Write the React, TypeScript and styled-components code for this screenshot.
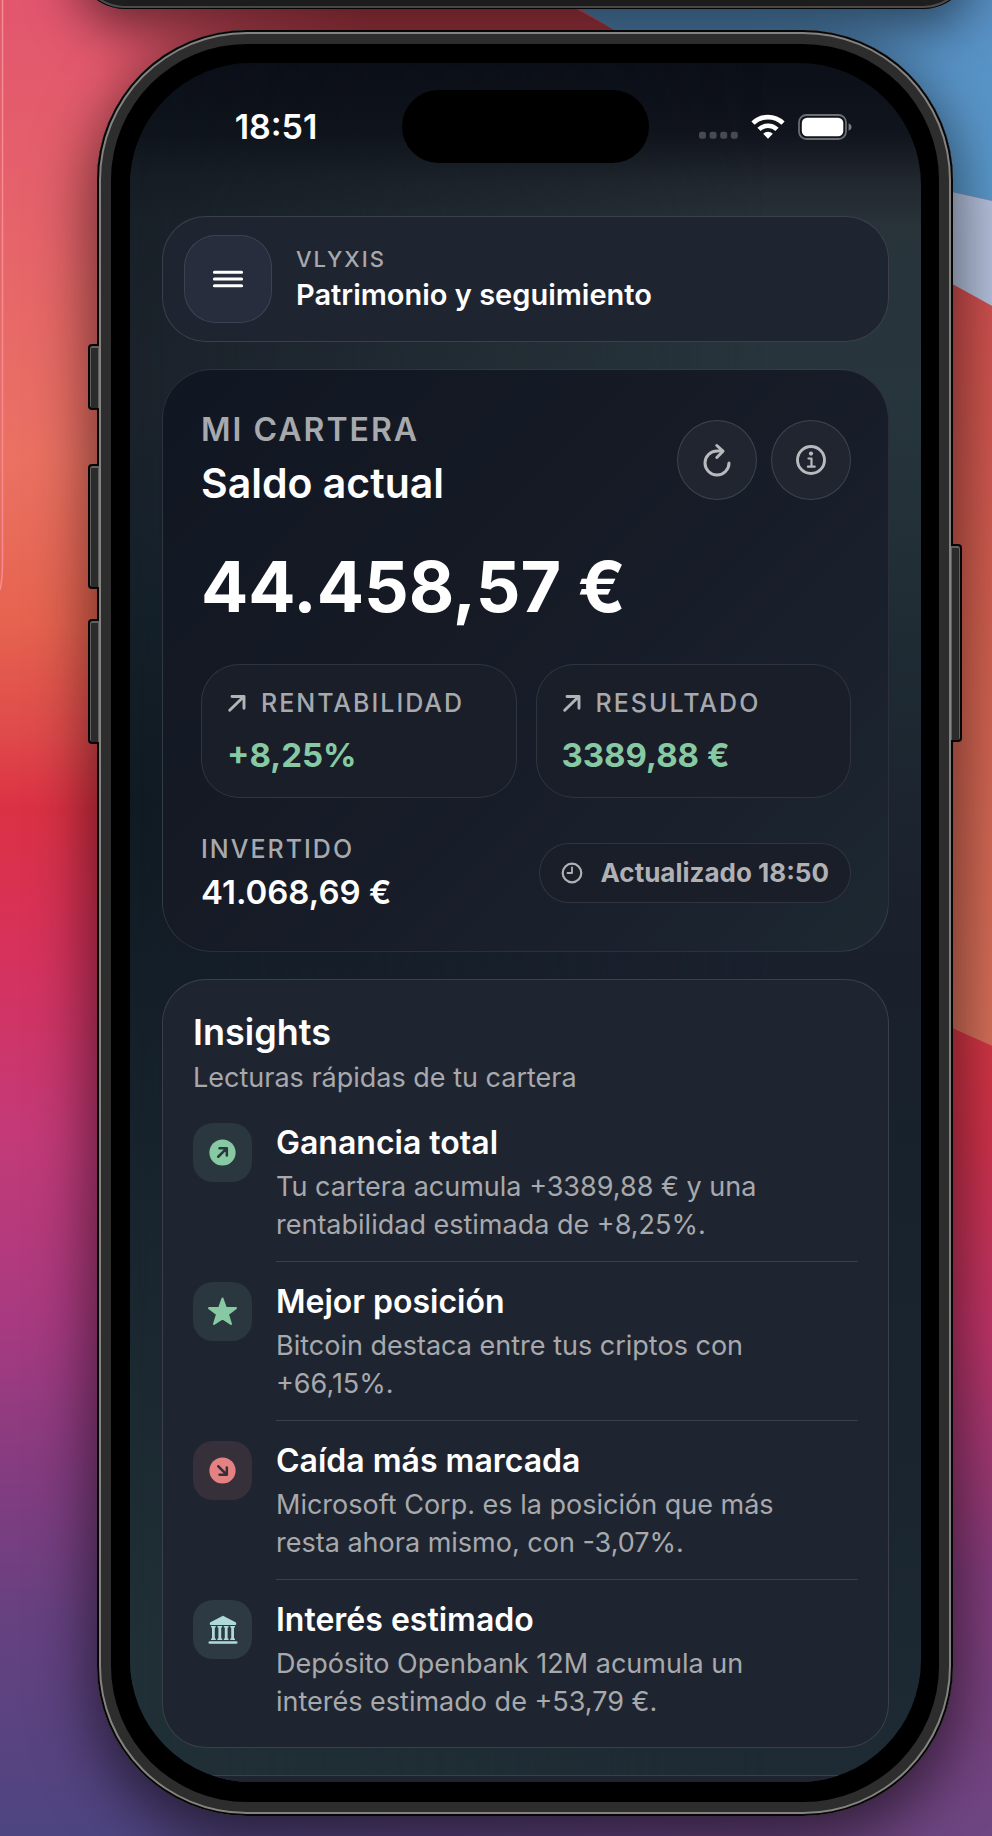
import React from "react";
import styled, { createGlobalStyle, css } from "styled-components";

const GlobalStyle = createGlobalStyle`
  *, *::before, *::after { box-sizing: border-box; }
  body {
    margin: 0;
    font-family: Inter, "Liberation Sans", sans-serif;
    background: #6f3f7c;
  }
  h1, h2, h3, p, ul, dl, dt, dd { margin: 0; padding: 0; font-weight: inherit; }
  button { font: inherit; color: inherit; padding: 0; cursor: pointer; }
`;

const colors = {
  card: "#1f2530",
  line: "rgba(255, 255, 255, 0.12)",
  text: "#ffffff",
  muted: "#a7a9ad",
  gain: "#87c9a3",
  loss: "#e48183",
  mint: "#aedbd8",
};

const Desktop = styled.div`
  position: relative;
  overflow: hidden;
  min-height: 100vh;
`;

const WallpaperSvg = styled.svg`
  position: absolute;
  inset: 0;
  width: 100%;
  height: 100%;
`;

const UpperPhone = styled.div`
  position: relative;
  height: 110px;
  margin: -101px 21px 21px 77px;
  border-radius: 48px;
  background: #1e1e1e;
  box-shadow:
    inset 0 0 0 1px #060606,
    inset 0 0 0 3px #4c4c4c,
    0 20px 50px rgba(0, 0, 0, 0.5);
`;

const Phone = styled.div`
  position: relative;
  margin: 0 39px 20px 97px;
  padding: 33px 32px 34px 33px;
  border-radius: 150px;
  background: #000;
  box-shadow:
    inset 0 0 0 2px #060606,
    inset 0 0 0 4px #858381,
    inset 0 0 0 14px #2d2d2d,
    0 20px 60px 6px rgba(0, 0, 0, 0.55);
`;

const SideKey = styled.span<{ $side: "left" | "right"; $top: number; $height: number }>`
  position: absolute;
  ${(p) => p.$side}: -9px;
  top: ${(p) => p.$top}px;
  width: 11px;
  height: ${(p) => p.$height}px;
  border: 2px solid #060606;
  border-${(p) => (p.$side === "left" ? "right" : "left")}: 0;
  border-radius: ${(p) => (p.$side === "left" ? "4px 0 0 4px" : "0 4px 4px 0")};
  background: #2b2b2b;
  box-shadow: inset 0 1px 0 1px #62605e;
`;

const Screen = styled.div`
  position: relative;
  isolation: isolate;
  overflow: hidden;
  padding: 27px 32px 0;
  border-radius: 122px;
  background: linear-gradient(
    #0b0f18 0,
    #10141c 70px,
    #22282f 120px,
    #28333a 165px,
    #27353c 330px,
    #1f2c34 560px,
    #1a202c 860px,
    #17222c 1120px,
    #1a252f 1440px,
    #1e2b34 1720px
  );

  &::before {
    content: "";
    position: absolute;
    inset: 0;
    z-index: -1;
    background: linear-gradient(
      #0b0f18 0,
      #0f141c 70px,
      #151c23 110px,
      #182028 160px,
      #1b222b 330px,
      #15202a 500px,
      #0f1a22 740px,
      #141e28 920px,
      #19262f 1200px,
      #203036 1600px
    );
    mask-image: linear-gradient(90deg, #000, transparent 80%);
  }
`;

const StatusBar = styled.header`
  display: grid;
  grid-template-columns: 1fr auto 1fr;
  align-items: center;
  margin: 0 -12px 53px;
`;

const Clock = styled.time`
  text-align: center;
  font-size: 34px;
  line-height: 40px;
  font-weight: 600;
  color: ${colors.text};
`;

const Island = styled.div`
  width: 247px;
  height: 73px;
  border-radius: 37px;
  background: #000;
`;

const StatusIcons = styled.div`
  display: flex;
  align-items: center;
  justify-content: center;
  gap: 13px;
`;

const Stack = styled.main`
  display: flex;
  flex-direction: column;
  gap: 27px;
`;

const Card = styled.section`
  border: 1px solid ${colors.line};
  border-radius: 44px;
  background: ${colors.card};
`;

const NavCard = styled(Card)`
  display: flex;
  align-items: center;
  gap: 24px;
  padding: 18px 21px;
`;

const MenuButton = styled.button`
  display: grid;
  place-items: center;
  width: 88px;
  height: 88px;
  border: 1px solid rgba(255, 255, 255, 0.1);
  border-radius: 32px;
  background: #282d3d;
`;

const NavText = styled.div`
  display: grid;
  gap: 4px;
`;

const Overline = styled.p<{ $size?: "small" | "medium" | "large" }>`
  color: ${colors.muted};
  text-transform: uppercase;
  letter-spacing: 2px;
  ${(p) =>
    p.$size === "large"
      ? css`
          font-size: 32px;
          line-height: 38px;
          font-weight: 600;
        `
      : p.$size === "small"
        ? css`
            font-size: 22px;
            line-height: 28px;
            font-weight: 500;
          `
        : css`
            font-size: 25px;
            line-height: 30px;
            font-weight: 500;
          `}
`;

const NavTitle = styled.h1`
  font-size: 29px;
  line-height: 36px;
  font-weight: 600;
  color: ${colors.text};
`;

const BalanceCard = styled(Card)`
  padding: 41px 37px 39px 38px;
  border-radius: 50px;
  border-color: rgba(255, 255, 255, 0.1);
  background: linear-gradient(135deg, #111722 0%, #151a25 40%, #1a202c 75%, #1d2932 100%);
`;

const BalanceHead = styled.div`
  display: flex;
  align-items: center;
  justify-content: space-between;
`;

const HeadText = styled.div`
  display: grid;
  gap: 9px;
`;

const BalanceTitle = styled.h2`
  font-size: 41px;
  line-height: 50px;
  font-weight: 600;
  color: ${colors.text};
`;

const HeadActions = styled.div`
  display: flex;
  gap: 14px;
`;

const RoundButton = styled.button`
  display: grid;
  place-items: center;
  width: 80px;
  height: 80px;
  border: 1px solid rgba(255, 255, 255, 0.14);
  border-radius: 50%;
  background: #20252f;
  color: #b9babd;
`;

const Amount = styled.p`
  margin-top: 37px;
  font-size: 70px;
  line-height: 84px;
  font-weight: 700;
  color: ${colors.text};
`;

const Stats = styled.dl`
  display: grid;
  grid-template-columns: 1fr 1fr;
  gap: 19px;
  margin-top: 35px;
`;

const Stat = styled.div`
  display: grid;
  gap: 17px;
  padding: 23px 25px 22px;
  border: 1px solid rgba(255, 255, 255, 0.1);
  border-radius: 38px;
  background: #191e29;
`;

const StatLabel = styled.dt`
  display: flex;
  align-items: center;
  gap: 14px;
  color: #b3b4b8;
`;

const Figure = styled.dd<{ $tone?: "gain" }>`
  font-size: 33px;
  line-height: 40px;
  font-weight: ${(p) => (p.$tone ? 700 : 600)};
  color: ${(p) => (p.$tone ? colors.gain : colors.text)};
`;

const BalanceFoot = styled.div`
  display: flex;
  align-items: center;
  justify-content: space-between;
  margin-top: 36px;
`;

const Invested = styled.dl`
  display: grid;
  gap: 8px;
`;

const UpdatedPill = styled.p`
  display: flex;
  align-items: center;
  gap: 18px;
  height: 60px;
  padding: 0 21px;
  border: 1px solid rgba(255, 255, 255, 0.1);
  border-radius: 30px;
  background: #191e29;
  color: #b0b1b4;
  font-size: 26px;
  line-height: 30px;
  font-weight: 700;
`;

const InsightsCard = styled(Card)`
  padding: 30px 30px 26px;
`;

const InsightsHead = styled.header`
  display: grid;
  gap: 5px;
`;

const InsightsTitle = styled.h2`
  font-size: 36px;
  line-height: 44px;
  font-weight: 600;
  color: ${colors.text};
`;

const BodyText = styled.p`
  font-size: 27px;
  line-height: 38px;
  color: ${colors.muted};
`;

const InsightList = styled.ul`
  margin-top: 26px;
  list-style: none;
`;

const InsightItem = styled.li`
  display: flex;
  align-items: flex-start;
  gap: 24px;
`;

const IconTile = styled.span<{ $tone: Tone }>`
  display: grid;
  place-items: center;
  flex: none;
  width: 59px;
  height: 59px;
  border-radius: 20px;
  color: ${(p) => colors[p.$tone]};
  background: ${(p) => ({ gain: "#2a373f", loss: "#36303a", mint: "#2d3a43" })[p.$tone]};
`;

const InsightBody = styled.div`
  flex: 1;
  display: grid;
  gap: 5px;

  ${InsightItem}:not(:last-child) > & {
    padding-bottom: 17px;
    margin-bottom: 20px;
    border-bottom: 1px solid ${colors.line};
  }
`;

const InsightName = styled.h3`
  font-size: 32px;
  line-height: 40px;
  font-weight: 600;
  color: ${colors.text};
`;

const NextCard = styled(Card)`
  height: 88px;
  margin-bottom: -81px;
`;

type Tone = "gain" | "loss" | "mint";

const Wallpaper = () => (
  <WallpaperSvg viewBox="0 0 992 1836" preserveAspectRatio="none" aria-hidden="true">
    <defs>
      <linearGradient id="left" x1="0" y1="0" x2="0" y2="1">
        <stop offset="0" stopColor="#e2566e" />
        <stop offset="0.13" stopColor="#e6646a" />
        <stop offset="0.25" stopColor="#eb7162" />
        <stop offset="0.34" stopColor="#e6634f" />
        <stop offset="0.4" stopColor="#df4a4a" />
        <stop offset="0.44" stopColor="#dc3144" />
        <stop offset="0.52" stopColor="#d6325c" />
        <stop offset="0.62" stopColor="#c33a78" />
        <stop offset="0.72" stopColor="#a83a80" />
        <stop offset="0.8" stopColor="#853c80" />
        <stop offset="0.88" stopColor="#674180" />
        <stop offset="1" stopColor="#4d4580" />
      </linearGradient>
      <linearGradient id="right" x1="0" y1="0" x2="0" y2="1">
        <stop offset="0" stopColor="#d63840" />
        <stop offset="0.2" stopColor="#d2324a" />
        <stop offset="0.42" stopColor="#c03468" />
        <stop offset="0.7" stopColor="#843c7c" />
        <stop offset="1" stopColor="#6d4682" />
      </linearGradient>
      <linearGradient id="top" x1="0" y1="0" x2="1" y2="0">
        <stop offset="0" stopColor="#b83c48" stopOpacity="0" />
        <stop offset="0.4" stopColor="#b83c48" />
        <stop offset="1" stopColor="#b83c48" />
      </linearGradient>
      <linearGradient id="bottom" x1="0" y1="0" x2="1" y2="0">
        <stop offset="0" stopColor="#6b4480" stopOpacity="0" />
        <stop offset="1" stopColor="#6b4480" />
      </linearGradient>
      <linearGradient id="coral" x1="0" y1="0" x2="0" y2="1">
        <stop offset="0" stopColor="#d24c4f" />
        <stop offset="0.5" stopColor="#d2604f" />
        <stop offset="1" stopColor="#d8705a" />
      </linearGradient>
      <linearGradient id="sky" x1="0" y1="0" x2="0" y2="1">
        <stop offset="0" stopColor="#5890c4" />
        <stop offset="1" stopColor="#5a9acd" />
      </linearGradient>
    </defs>
    <rect width="992" height="1836" fill="url(#left)" />
    <path d="M100 0H560L760 110V400H100Z" fill="url(#top)" />
    <path d="M566 0H992V201L800 158L614 30Z" fill="url(#sky)" />
    <path d="M800 158L992 201V306L800 200Z" fill="#b6c3de" />
    <path d="M800 200L992 306V1046L800 960Z" fill="url(#coral)" />
    <path d="M800 960L992 1046V1836H800Z" fill="url(#right)" />
    <path d="M100 1700H800V1836H100Z" fill="url(#bottom)" />
    <path d="M2.500 0V560Q2.500 580 0 590" fill="none" stroke="#f58c92" strokeWidth="1.500" />
  </WallpaperSvg>
);

const MenuIcon = () => (
  <svg width="32" height="20" viewBox="0 0 32 20" stroke="#fff" strokeWidth="3" strokeLinecap="round" aria-hidden="true">
    <path d="M2.400 3.200h27.200M2.400 10h27.200M2.400 16.800h27.200" />
  </svg>
);

const SignalDots = () => (
  <svg width="39" height="25" viewBox="0 0 39 25" fill="#474a50" aria-hidden="true">
    {[0, 10.600, 21.200, 31.800].map((x) => (
      <rect key={x} x={x} y="17.800" width="7" height="7" rx="2.200" />
    ))}
  </svg>
);

const WifiIcon = () => (
  <svg width="34" height="25" viewBox="0 0 34 25" fill="none" stroke="#fff" strokeWidth="4.600" aria-hidden="true">
    <path d="M2 9.200a21.500 21.500 0 0 1 30 0" />
    <path d="M8 15.400a13 13 0 0 1 18 0" />
    <path d="M17 24.700l-4.800-5a6.900 6.900 0 0 1 9.600 0z" fill="#fff" stroke="none" />
  </svg>
);

const BatteryIcon = () => (
  <svg width="54" height="26" viewBox="0 0 54 26" aria-hidden="true">
    <rect x="1" y="1" width="47" height="24" rx="7.500" fill="none" stroke="#6b6e73" strokeWidth="1.800" />
    <rect x="3.800" y="3.800" width="41.500" height="18.400" rx="5.200" fill="#fff" />
    <path d="M50.600 9.300v7.400c1.800-.7 2.900-2.100 2.900-3.700s-1.100-3-2.900-3.700z" fill="#7b7d82" />
  </svg>
);

const RefreshIcon = () => (
  <svg width="32" height="34" viewBox="0 0 32 34" fill="none" stroke="currentColor" strokeWidth="3" strokeLinecap="round" strokeLinejoin="round" aria-hidden="true">
    <path d="M28 20A12 12 0 1 1 16 8h5.500" />
    <path d="M15.800 2.500L22 8.200L15.800 14.500" />
  </svg>
);

const InfoIcon = () => (
  <svg width="32" height="32" viewBox="0 0 32 32" fill="none" stroke="currentColor" strokeLinecap="round" strokeLinejoin="round" aria-hidden="true">
    <circle cx="16" cy="16" r="13.500" strokeWidth="2.900" />
    <circle cx="16" cy="9.600" r="2.100" fill="currentColor" stroke="none" />
    <path d="M13.500 14.500h3v8M12.900 22.700h6.800" strokeWidth="2.200" />
  </svg>
);

const ArrowUpRight = () => (
  <svg width="20" height="20" viewBox="0 0 20 20" fill="none" stroke="currentColor" strokeWidth="2.900" strokeLinecap="round" strokeLinejoin="round" aria-hidden="true">
    <path d="M2.700 17.300L16.300 4M5 3.500h12v11.800" />
  </svg>
);

const ClockIcon = () => (
  <svg width="22" height="22" viewBox="0 0 22 22" fill="none" stroke="currentColor" strokeWidth="2.200" strokeLinecap="round" strokeLinejoin="round" aria-hidden="true">
    <circle cx="11" cy="11" r="9.300" />
    <path d="M11 5.300V11H6.500" strokeWidth="1.800" />
  </svg>
);

const ArrowDisc = ({ down = false, cut }: { down?: boolean; cut: string }) => (
  <svg width="27" height="27" viewBox="0 0 28 28" aria-hidden="true">
    <circle cx="14" cy="14" r="13.600" fill="currentColor" />
    <path
      d={down ? "M9.600 9.600L18 18M10.900 18.500h7.600v-7.600" : "M9.600 18.400L18 10M10.900 9.500h7.600v7.600"}
      fill="none"
      stroke={cut}
      strokeWidth="2.600"
      strokeLinecap="round"
      strokeLinejoin="round"
    />
  </svg>
);

const StarIcon = () => (
  <svg width="31" height="31" viewBox="0 0 30 30" fill="currentColor" stroke="currentColor" strokeWidth="2" strokeLinejoin="round" aria-hidden="true">
    <path d="M15 2.400L18.200 11.500L28 11.700L20.300 17.700L23.200 27.100L15 21.600L6.800 27.100L9.700 17.700L2 11.700L11.800 11.500Z" />
  </svg>
);

const BankIcon = () => (
  <svg width="30" height="30" viewBox="0 0 30 30" fill="currentColor" aria-hidden="true">
    <path d="M15 .8L27.600 7.300c.8.400.9 2.700 0 2.700H2.400c-.9 0-.8-2.300 0-2.700z" />
    {[3, 9.400, 15.800, 22.200].map((x) => (
      <path key={x} d={`M${x} 11h4.800v1.200l-1 .6v10.400l1 .6v1.200H${x}v-1.200l1-.6V12.800l-1-.6z`} />
    ))}
    <rect x="0.500" y="26.200" width="29" height="2.600" rx="1.300" />
  </svg>
);

const insights: { title: string; text: React.ReactNode; tone: Tone; icon: React.ReactNode }[] = [
  {
    title: "Ganancia total",
    text: <>Tu cartera acumula +3389,88 € y una<br />rentabilidad estimada de +8,25%.</>,
    tone: "gain",
    icon: <ArrowDisc cut="#2a373f" />,
  },
  {
    title: "Mejor posición",
    text: <>Bitcoin destaca entre tus criptos con<br />+66,15%.</>,
    tone: "gain",
    icon: <StarIcon />,
  },
  {
    title: "Caída más marcada",
    text: <>Microsoft Corp. es la posición que más<br />resta ahora mismo, con -3,07%.</>,
    tone: "loss",
    icon: <ArrowDisc down cut="#36303a" />,
  },
  {
    title: "Interés estimado",
    text: <>Depósito Openbank 12M acumula un<br />interés estimado de +53,79 €.</>,
    tone: "mint",
    icon: <BankIcon />,
  },
];

const stats = [
  { label: "Rentabilidad", value: "+8,25%" },
  { label: "Resultado", value: "3389,88 €" },
];

export default function App() {
  return (
    <Desktop>
      <GlobalStyle />
      <Wallpaper />
      <UpperPhone />
      <Phone>
        <SideKey $side="left" $top={314} $height={66} />
        <SideKey $side="left" $top={434} $height={125} />
        <SideKey $side="left" $top={589} $height={125} />
        <SideKey $side="right" $top={514} $height={198} />
        <Screen>
          <StatusBar>
            <Clock>18:51</Clock>
            <Island />
            <StatusIcons>
              <SignalDots />
              <WifiIcon />
              <BatteryIcon />
            </StatusIcons>
          </StatusBar>
          <Stack>
            <NavCard as="nav">
              <MenuButton type="button" aria-label="Menú">
                <MenuIcon />
              </MenuButton>
              <NavText>
                <Overline $size="small">Vlyxis</Overline>
                <NavTitle>Patrimonio y seguimiento</NavTitle>
              </NavText>
            </NavCard>

            <BalanceCard>
              <BalanceHead>
                <HeadText>
                  <Overline $size="large">Mi cartera</Overline>
                  <BalanceTitle>Saldo actual</BalanceTitle>
                </HeadText>
                <HeadActions>
                  <RoundButton type="button" aria-label="Actualizar">
                    <RefreshIcon />
                  </RoundButton>
                  <RoundButton type="button" aria-label="Información">
                    <InfoIcon />
                  </RoundButton>
                </HeadActions>
              </BalanceHead>
              <Amount>44.458,57 €</Amount>
              <Stats>
                {stats.map((s) => (
                  <Stat key={s.label}>
                    <StatLabel>
                      <ArrowUpRight />
                      <Overline as="span">{s.label}</Overline>
                    </StatLabel>
                    <Figure $tone="gain">{s.value}</Figure>
                  </Stat>
                ))}
              </Stats>
              <BalanceFoot>
                <Invested>
                  <Overline as="dt">Invertido</Overline>
                  <Figure>41.068,69 €</Figure>
                </Invested>
                <UpdatedPill>
                  <ClockIcon />
                  Actualizado 18:50
                </UpdatedPill>
              </BalanceFoot>
            </BalanceCard>

            <InsightsCard>
              <InsightsHead>
                <InsightsTitle>Insights</InsightsTitle>
                <BodyText>Lecturas rápidas de tu cartera</BodyText>
              </InsightsHead>
              <InsightList>
                {insights.map((item) => (
                  <InsightItem key={item.title}>
                    <IconTile $tone={item.tone}>{item.icon}</IconTile>
                    <InsightBody>
                      <InsightName>{item.title}</InsightName>
                      <BodyText>{item.text}</BodyText>
                    </InsightBody>
                  </InsightItem>
                ))}
              </InsightList>
            </InsightsCard>

            <NextCard aria-hidden="true" />
          </Stack>
        </Screen>
      </Phone>
    </Desktop>
  );
}
